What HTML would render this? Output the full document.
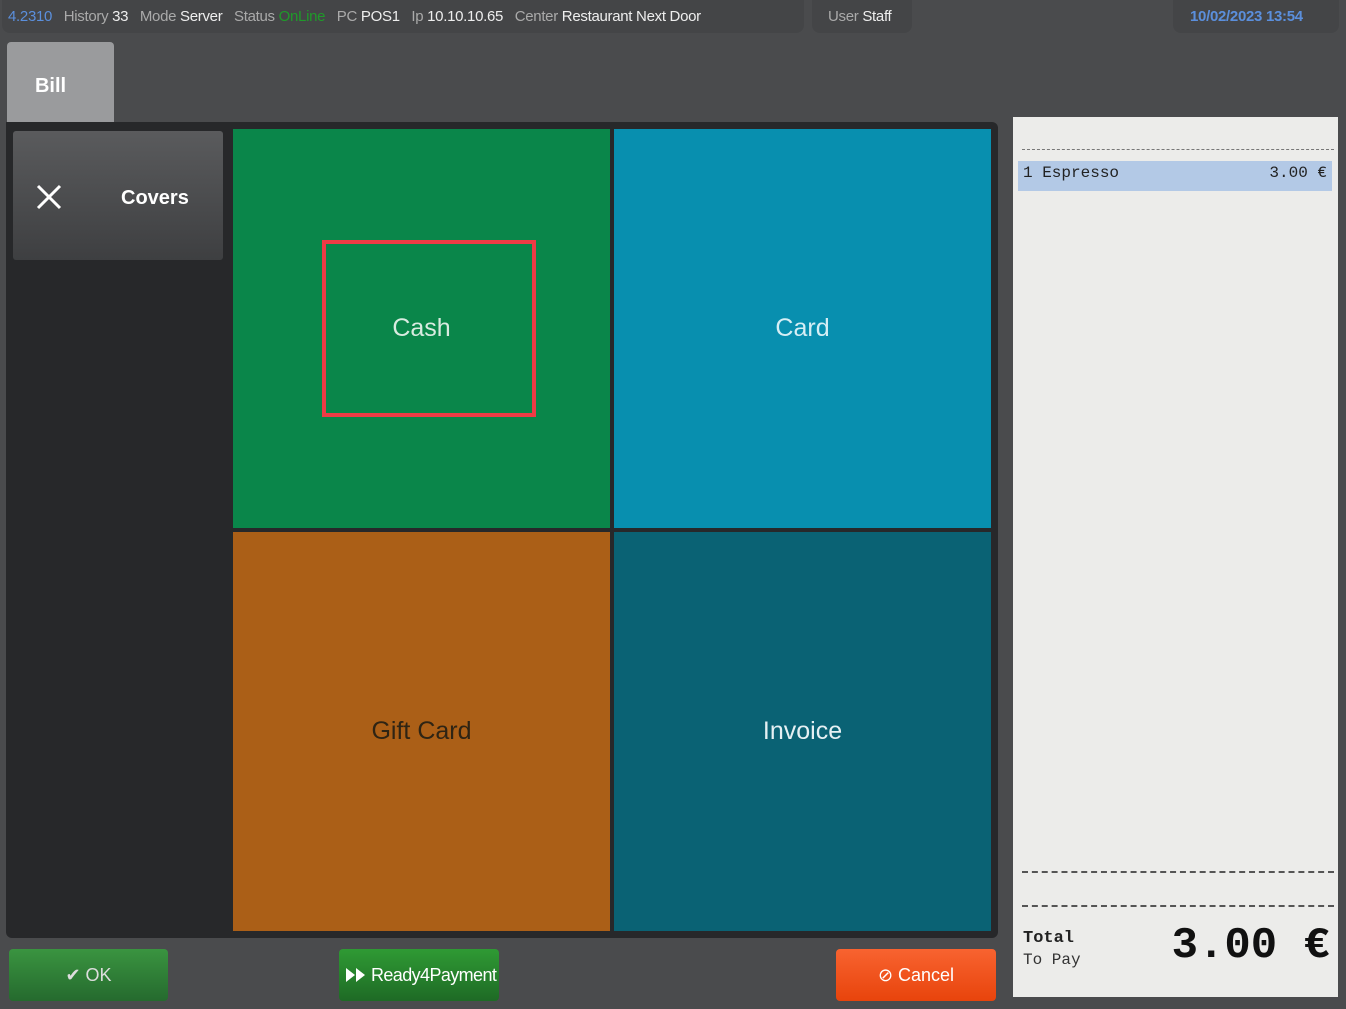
<!DOCTYPE html>
<html><head><meta charset="utf-8"><style>
*{box-sizing:border-box;margin:0;padding:0}
body{width:1346px;height:1009px;background:#4a4b4d;font-family:"Liberation Sans",sans-serif;position:relative;overflow:hidden}
.abs{position:absolute}
.top{left:2px;top:0;width:802px;height:33px;background:#444547;border-radius:0 0 8px 8px;font-size:15px;color:#aaa;line-height:34px;padding-left:6px;white-space:nowrap;letter-spacing:-0.3px}
.top b{color:#eee;font-weight:normal}
.tile{position:absolute;display:flex;align-items:center;justify-content:center;font-size:25px}
.btn{position:absolute;top:949px;height:52px;border-radius:4px;color:#fff;font-size:18px;display:flex;align-items:center;justify-content:center}
</style></head><body>
<div class="abs top"><span style="color:#5b8fdc">4.2310</span> &nbsp; History <b>33</b> &nbsp; Mode <b>Server</b> &nbsp; Status <span style="color:#1f9a2a">OnLine</span> &nbsp; PC <b>POS1</b> &nbsp; Ip <b>10.10.10.65</b> &nbsp; Center <b>Restaurant Next Door</b></div>
<div class="abs top" style="left:812px;width:100px;padding-left:16px">User <b>Staff</b></div>
<div class="abs top" style="left:1173px;width:166px;color:#5b8fdc;font-weight:bold;padding-left:17px;font-size:15px">10/02/2023 13:54</div>
<div class="abs" style="left:7px;top:42px;width:107px;height:82px;background:#9a9b9d;border-radius:4px 4px 0 0;color:#fff;font-weight:bold;font-size:20px;line-height:88px;text-align:center;padding-right:20px">Bill</div>
<div class="abs" style="left:6px;top:122px;width:992px;height:816px;background:#27282a;border-radius:0 6px 6px 6px"></div>
<div class="abs" style="left:13px;top:131px;width:210px;height:129px;background:linear-gradient(#5a5b5d,#3e3f41);border-radius:3px;color:#fff;font-weight:bold;font-size:20px">
<svg class="abs" style="left:22px;top:52px" width="28" height="28" viewBox="0 0 28 28"><path d="M3 3L25 25M25 3L3 25" stroke="#fff" stroke-width="3"/></svg>
<span class="abs" style="left:108px;top:56px">Covers</span></div>
<div class="tile" style="left:233px;top:129px;width:377px;height:399px;background:#0a864a;color:#d9ebe0">Cash</div>
<div class="abs" style="left:322px;top:240px;width:214px;height:177px;border:4px solid #ef3b45"></div>
<div class="tile" style="left:614px;top:129px;width:377px;height:399px;background:#088faf;color:#d6eef5">Card</div>
<div class="tile" style="left:233px;top:532px;width:377px;height:399px;background:#ab5f17;color:#2e2414">Gift Card</div>
<div class="tile" style="left:614px;top:532px;width:377px;height:399px;background:#0a6274;color:#e5f0f3">Invoice</div>
<div class="btn" style="left:9px;width:159px;background:linear-gradient(#3a9440,#256a2e);color:#ddd">✔ OK</div>
<div class="btn" style="left:339px;width:160px;background:linear-gradient(#2f9a34,#1e6a25);justify-content:flex-start;padding-left:6px;overflow:hidden;white-space:nowrap;letter-spacing:-0.6px"><svg width="22" height="16" viewBox="0 0 22 16" style="margin-right:4px"><path d="M1 1L10 8L1 15ZM11 1L20 8L11 15Z" fill="#fff"/></svg>Ready4Payment</div>
<div class="btn" style="left:836px;width:160px;background:linear-gradient(#f86330,#e8440c)">⊘ Cancel</div>
<div class="abs" style="left:1013px;top:117px;width:325px;height:880px;background:#ececea;font-family:'Liberation Mono',monospace">
<div class="abs" style="left:9px;top:32px;width:312px;border-top:1px dashed #777"></div>
<div class="abs" style="left:5px;top:44px;width:314px;height:30px;background:#b3c9e6;font-size:16px;line-height:25px;padding:0 5px;color:#222"><span>1 Espresso</span><span style="float:right">3.00 €</span></div>
<div class="abs" style="left:9px;top:754px;width:312px;border-top:2px dashed #555"></div>
<div class="abs" style="left:9px;top:788px;width:312px;border-top:2px dashed #555"></div>
<div class="abs" style="left:10px;top:812px;font-size:17px;font-weight:bold;color:#222">Total</div>
<div class="abs" style="left:10px;top:834px;font-size:16px;color:#333">To Pay</div>
<div class="abs" style="right:8px;top:804px;font-size:44px;font-weight:bold;color:#111">3.00 €</div>
</div>
</body></html>
